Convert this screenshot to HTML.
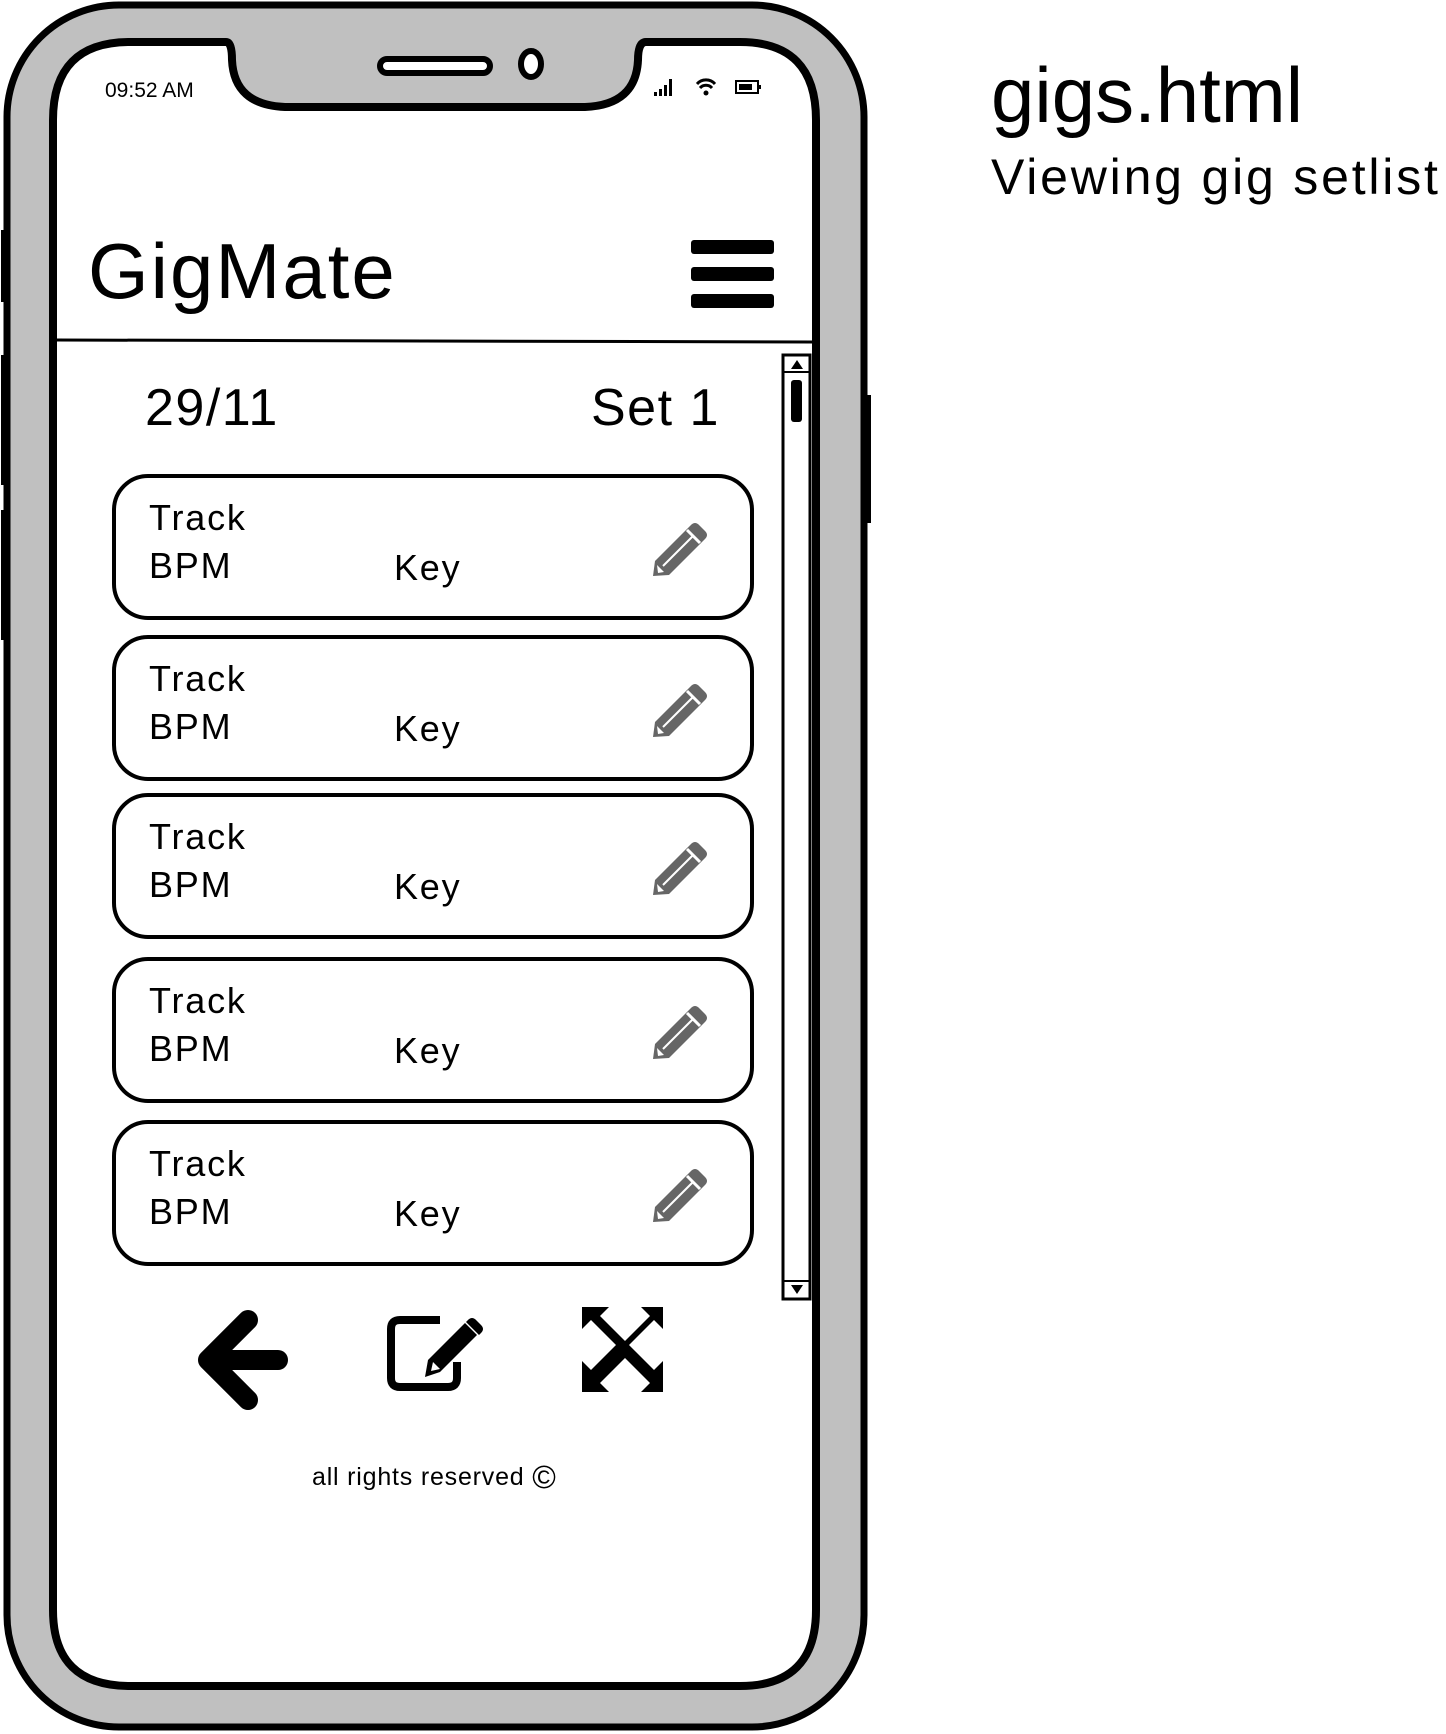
<!DOCTYPE html>
<html><head><meta charset="utf-8"><style>
body{margin:0;width:1446px;height:1734px;background:#fff;overflow:hidden;position:relative;font-family:"Liberation Sans",sans-serif;}
.t{position:absolute;color:#000;white-space:nowrap;line-height:1;}
.c{letter-spacing:1.8px;}
</style></head><body>
<svg width="1446" height="1734" style="position:absolute;left:0;top:0">
<rect x="7" y="5" width="857" height="1722" rx="112" fill="#c0c0c0" stroke="#000" stroke-width="7"/>
<rect x="1" y="230" width="6" height="72" fill="#000"/>
<rect x="1" y="355" width="6" height="130" fill="#000"/>
<rect x="1" y="510" width="6" height="130" fill="#000"/>
<rect x="864" y="395" width="7" height="128" fill="#000"/>
<path d="M130 42 H226 Q232 42 232 60 Q234 105 285 107 H585 Q636 105 638 60 Q638 42 646 42 H740 Q816 42 816 120 V1610 Q816 1686 740 1686 H130 Q53 1686 53 1610 V120 Q53 42 130 42 Z" fill="#fff" stroke="#000" stroke-width="8"/>
<rect x="380" y="59" width="110" height="14" rx="7" fill="#fff" stroke="#000" stroke-width="6"/>
<ellipse cx="531" cy="64" rx="10" ry="13" fill="#fff" stroke="#000" stroke-width="6"/>
<rect x="654" y="92" width="3" height="4" fill="#000"/><rect x="659" y="89" width="3" height="7" fill="#000"/><rect x="664" y="85" width="3" height="11" fill="#000"/><rect x="669" y="79" width="3" height="17" fill="#000"/>
<path d="M697 84 a12 12 0 0 1 18 0 M700 88 a8 8 0 0 1 12 0" stroke="#000" stroke-width="3" fill="none"/><circle cx="706" cy="93" r="2.5" fill="#000"/>
<rect x="736" y="81" width="22" height="12" fill="#fff" stroke="#000" stroke-width="2"/><rect x="739" y="84" width="13" height="6" fill="#000"/><rect x="758" y="85" width="3" height="4" fill="#000"/>
<rect x="691" y="240" width="83" height="14" rx="3" fill="#000"/>
<rect x="691" y="267" width="83" height="14" rx="3" fill="#000"/>
<rect x="691" y="294" width="83" height="14" rx="3" fill="#000"/>
<line x1="57" y1="340" x2="812" y2="342" stroke="#000" stroke-width="3"/>
<rect x="783" y="355" width="27" height="944" fill="#fff" stroke="#000" stroke-width="3"/>
<line x1="783" y1="372" x2="810" y2="372" stroke="#000" stroke-width="2"/>
<line x1="783" y1="1281" x2="810" y2="1281" stroke="#000" stroke-width="2"/>
<path d="M791 369 L797 360 L803 369 Z M791 1285 L797 1294 L803 1285 Z" fill="#000"/>
<rect x="791" y="380" width="11" height="42" rx="3" fill="#000"/>
<g fill="#fff" stroke="#000" stroke-width="4">
<rect x="114" y="476" width="638" height="142" rx="34"/>
<rect x="114" y="637" width="638" height="142" rx="34"/>
<rect x="114" y="795" width="638" height="142" rx="34"/>
<rect x="114" y="959" width="638" height="142" rx="34"/>
<rect x="114" y="1122" width="638" height="142" rx="34"/>
</g>
<defs><g id="pen"><path d="M0 55 L2 40 L38 4 Q42 0 46 4 L52 10 Q56 14 52 18 L16 54 Z" fill="#666"/><line x1="10" y1="45" x2="40" y2="15" stroke="#fff" stroke-width="2"/><line x1="34" y1="9" x2="47" y2="22" stroke="#fff" stroke-width="3"/><path d="M4 44 L11 51 L5 52 Z" fill="#fff"/></g></defs>
<use href="#pen" x="653" y="521"/>
<use href="#pen" x="653" y="682"/>
<use href="#pen" x="653" y="840"/>
<use href="#pen" x="653" y="1004"/>
<use href="#pen" x="653" y="1167"/>
<path d="M248 1320 L208 1360 L248 1400 M212 1360 H278" stroke="#000" stroke-width="20" stroke-linecap="round" stroke-linejoin="round" fill="none"/>
<path d="M440 1320 H400 Q391 1320 391 1329 V1378 Q391 1387 400 1387 H448 Q457 1387 457 1378 V1362" stroke="#000" stroke-width="8" fill="none"/>
<path d="M425 1377 L428 1360 L465 1323 L477 1335 L440 1372 Z" fill="#000"/><path d="M468 1320 Q472 1316 476 1320 L481 1325 Q485 1329 481 1333 L479 1335 L466 1322 Z" fill="#000"/>
<path d="M431 1371 L433 1362 L440 1369 Z" fill="#fff"/>
<g fill="#000"><path d="M582 1307 H609 L600 1316 L625 1341 L650 1316 L641 1307 H663 V1329 L654 1320 L629 1345 L654 1370 L663 1361 V1392 H641 L650 1383 L625 1358 L600 1383 L609 1392 H582 V1361 L591 1370 L616 1345 L591 1320 L582 1329 Z"/></g>
</svg>
<div class="t" style="left:105px;top:80px;font-size:21px;">09:52 AM</div>
<div class="t" style="left:88px;top:232px;font-size:78px;letter-spacing:2px;">GigMate</div>
<div class="t" style="left:145px;top:382px;font-size:52px;letter-spacing:1.5px;">29/11</div>
<div class="t" style="left:591px;top:382px;font-size:52px;letter-spacing:1.5px;">Set 1</div>
<div class="t c" style="left:149px;top:500px;font-size:36px;">Track</div><div class="t c" style="left:149px;top:548px;font-size:36px;">BPM</div><div class="t c" style="left:394px;top:550px;font-size:36px;">Key</div>
<div class="t c" style="left:149px;top:661px;font-size:36px;">Track</div><div class="t c" style="left:149px;top:709px;font-size:36px;">BPM</div><div class="t c" style="left:394px;top:711px;font-size:36px;">Key</div>
<div class="t c" style="left:149px;top:819px;font-size:36px;">Track</div><div class="t c" style="left:149px;top:867px;font-size:36px;">BPM</div><div class="t c" style="left:394px;top:869px;font-size:36px;">Key</div>
<div class="t c" style="left:149px;top:983px;font-size:36px;">Track</div><div class="t c" style="left:149px;top:1031px;font-size:36px;">BPM</div><div class="t c" style="left:394px;top:1033px;font-size:36px;">Key</div>
<div class="t c" style="left:149px;top:1146px;font-size:36px;">Track</div><div class="t c" style="left:149px;top:1194px;font-size:36px;">BPM</div><div class="t c" style="left:394px;top:1196px;font-size:36px;">Key</div>
<div class="t" style="left:312px;top:1461px;font-size:25px;letter-spacing:0.8px;">all rights reserved <span style="font-size:32px;vertical-align:-3px;">©</span></div>
<div class="t" style="left:991px;top:56px;font-size:78px;">gigs.html</div>
<div class="t" style="left:991px;top:152px;font-size:50px;letter-spacing:2.8px;">Viewing gig setlist</div>
</body></html>
